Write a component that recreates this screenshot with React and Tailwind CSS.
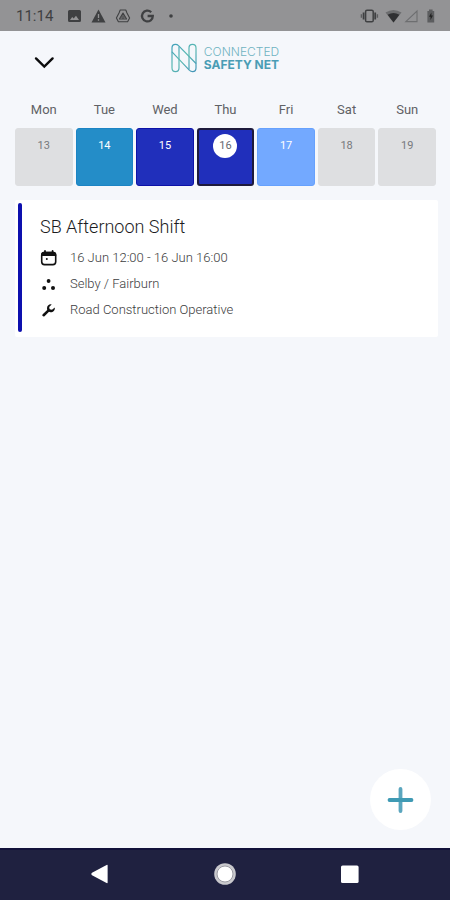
import { useState } from 'react';

const initialDays = [
  { name: 'Mon', date: 13, cell: 'bg-[#dedfe1] text-[#77797d] border border-[#dedfe1]' },
  { name: 'Tue', date: 14, cell: 'bg-[#248dc8] text-white border border-[#1c84c4]' },
  { name: 'Wed', date: 15, cell: 'bg-[#202fbb] text-white border border-[#0d12a8]' },
  { name: 'Thu', date: 16, cell: 'bg-[#202fbb] text-[#66696f] border-2 border-[#1d1a3c]', today: true },
  { name: 'Fri', date: 17, cell: 'bg-[#73a9ff] text-white border border-[#66a1fd]' },
  { name: 'Sat', date: 18, cell: 'bg-[#dedfe1] text-[#77797d] border border-[#dedfe1]' },
  { name: 'Sun', date: 19, cell: 'bg-[#dedfe1] text-[#77797d] border border-[#dedfe1]' }
];

const CalendarIcon = () => (
  <svg viewBox="0 0 18 16" className="w-[18px] h-4" fill="none">
    <rect x="1.7" y="2.6" width="14" height="12" rx="2.8" stroke="#111" strokeWidth="1.6" />
    <path d="M1.2 6V4.6Q1.2 1.8 4 1.8H13.4Q16.2 1.8 16.2 4.6V6Z" fill="#111" />
    <path d="M5 1V3M12.6 1V3" stroke="#111" strokeWidth="1.8" strokeLinecap="round" />
    <circle cx="6.8" cy="9" r="1" fill="#111" />
  </svg>
);

const DotsIcon = () => (
  <svg viewBox="0 0 18 16" className="w-[18px] h-4" fill="#111">
    <circle cx="8.6" cy="5" r="1.9" />
    <circle cx="4.2" cy="12" r="2" />
    <circle cx="13" cy="12" r="2" />
  </svg>
);

const WrenchIcon = () => (
  <svg viewBox="0 0 18 16" className="w-[18px] h-4" fill="none">
    <path d="M3.6 13.2L8.6 8.4" stroke="#111" strokeWidth="2.6" strokeLinecap="round" />
    <path
      d="M11.6 2.4C9 2 6.8 4 7 6.6C7 8.8 8.6 10.4 10.8 10.2C13.2 10.2 15.2 8.2 14.8 5.4L12 7.8L9.6 7.2L9.2 5Z"
      fill="#111"
    />
  </svg>
);

const shift = {
  title: 'SB Afternoon Shift',
  rows: [
    { Icon: CalendarIcon, text: '16 Jun 12:00 - 16 Jun 16:00' },
    { Icon: DotsIcon, text: 'Selby / Fairburn' },
    { Icon: WrenchIcon, text: 'Road Construction Operative' }
  ]
};

const StatusBar = () => (
  <div className="h-[31px] bg-[#939395] flex items-center justify-between pl-4 pr-3 pt-px text-[#3f4042]">
    <div className="flex items-center">
      <span className="text-[15px] w-[51px]">11:14</span>
      <svg viewBox="0 0 110 16" className="w-[110px] h-4">
        <path d="M2.5 2H12.5Q14 2 14 3.5V12.5Q14 14 12.5 14H2.5Q1 14 1 12.5V3.5Q1 2 2.5 2ZM3 12H12L9 7.8L6.7 10.6L5.2 9Z" fill="currentColor" fillRule="evenodd" />
        <path d="M31.5 1.5L38.5 14.5H24.5Z" fill="currentColor" />
        <path d="M31.5 6V10M31.5 11.2V12.8" stroke="#939395" strokeWidth="1.3" />
        <g fill="none" stroke="currentColor" strokeWidth="1.1" strokeLinejoin="round">
          <path d="M53.2 2H58.8L60 5L62.6 10L60.6 13.8H51.4L49.4 10L52 5Z" />
          <path d="M56 5L59.6 11H52.4Z" />
          <circle cx="56" cy="9" r="1.2" />
        </g>
        <path d="M84.2 4.2A5.4 5.4 0 1 0 85.8 8H80.6" fill="none" stroke="currentColor" strokeWidth="2.3" />
        <circle cx="104" cy="8" r="1.8" fill="currentColor" />
      </svg>
    </div>
    <svg viewBox="0 0 78 16" className="w-[78px] h-4">
      <rect x="5.6" y="2.2" width="7.6" height="11.6" rx="1.4" fill="none" stroke="currentColor" strokeWidth="1.5" />
      <path d="M3.6 4.6V11.4M15.2 4.6V11.4" stroke="currentColor" strokeWidth="1.8" />
      <path d="M1.4 6.2V9.8M17.4 6.2V9.8" stroke="#5b5c5e" strokeWidth="1.4" />
      <path d="M25.5 4.6Q33.5 -.4 41.5 4.6L33.5 14.6Z" fill="#6c6d6f" />
      <path d="M27.6 6.8Q33.5 3.2 39.4 6.8L33.5 14.4Z" fill="#2f3032" />
      <path d="M57 3V13.6H45.8Z" fill="none" stroke="#6d6e70" strokeWidth="1.1" />
      <path d="M67.4 3H69V1.6H72.6V3H74.2V14.4H67.4Z" fill="#5c5d5f" />
      <path d="M71.4 4.4L69 8.8H70.5V12L73 7.6H71.4Z" fill="#222" />
    </svg>
  </div>
);

const Logo = () => (
  <div className="flex items-center gap-[7px]">
    <svg viewBox="0 0 26 30" className="w-[26px] h-[30px]" fill="none" stroke="url(#logoGradient)" strokeWidth="1.2" strokeLinejoin="round">
      <defs>
        <linearGradient id="logoGradient" x1="0" y1="0" x2="26" y2="30" gradientUnits="userSpaceOnUse">
          <stop offset="0" stopColor="#3d9dba" />
          <stop offset="0.5" stopColor="#5cbab2" />
          <stop offset="1" stopColor="#3d8fb8" />
        </linearGradient>
      </defs>
      <path d="M1 8.8V5Q1 1.4 4.4 1.4Q6.3 1.4 7.5 2.7L25 20.5V25Q25 28.6 21.6 28.6Q19.8 28.6 18.5 27.3L1 8.8Z" />
      <path d="M1 8.8V25Q1 28.6 4.5 28.6Q8 28.6 8 25V3.4" />
      <path d="M25 20.5V5Q25 1.4 21.5 1.4Q18 1.4 18 5V26.6" />
    </svg>
    <div className="font-[Inter,sans-serif] text-[12px] leading-[13px]">
      <p className="font-light text-[#6fb3c1]">CONNECTED</p>
      <p className="font-bold text-[#4a9db5]">SAFETY NET</p>
    </div>
  </div>
);

const Header = () => (
  <header className="grid grid-cols-[1fr_auto_1fr] items-center h-[54px] px-8">
    <button aria-label="Collapse calendar" className="justify-self-start pt-2">
      <svg viewBox="0 0 24 16" className="w-6 h-4" fill="none" stroke="#0c0c0d" strokeWidth="2.4">
        <path d="M4 4.4L12.3 12.6L20.6 4.4" strokeLinecap="round" />
      </svg>
    </button>
    <Logo />
  </header>
);

const NavBar = () => (
  <nav className="h-[52px] shrink-0 bg-[#1f2140] border-t-2 border-[#12123a] pb-0.5 grid grid-cols-[1fr_auto_1fr] items-center px-[88px]">
    <button aria-label="Back" className="justify-self-start">
      <svg viewBox="0 0 20 20" className="w-5 h-5" fill="#fff">
        <path d="M19.6 1.4V18.6Q19.6 19.4 18.6 19L4 11.2Q2.4 10 4 8.8L18.6 1Q19.6 .6 19.6 1.4Z" />
      </svg>
    </button>
    <button aria-label="Home">
      <svg viewBox="0 0 24 24" className="w-6 h-6">
        <circle cx="12" cy="12" r="10.8" fill="#c9c9cd" />
        <circle cx="12" cy="12" r="8" fill="#fff" stroke="#9b9ba3" strokeWidth="1" />
      </svg>
    </button>
    <button aria-label="Recent apps" className="justify-self-end">
      <svg viewBox="0 0 24 20" className="w-6 h-5" fill="#fff">
        <rect x="3" y="1.4" width="17.6" height="17.6" rx="1.6" />
      </svg>
    </button>
  </nav>
);

const App = () => {
  const [selected, setSelected] = useState(16);

  return (
    <div className="min-h-screen flex flex-col bg-[#f5f7fb] font-[Roboto,sans-serif]">
      <StatusBar />
      <Header />

      <main className="flex-1 flex flex-col pl-[15px] pr-3">
        {/* Week strip */}
        <div className="grid grid-cols-7 gap-[3px] pt-4 pr-0.5">
          {initialDays.map((day) => (
            <button
              key={day.name}
              onClick={() => setSelected(day.date)}
              aria-pressed={selected === day.date}
              className="flex flex-col items-center"
            >
              <span className="text-[13px] leading-[18px] text-[#5f6165] mb-[9px]">
                {day.name}
              </span>
              <span className={`w-full h-[58px] rounded-[3px] flex justify-center items-start
                              text-[11px] leading-[22px] ${day.cell}`}>
                <span className={day.today
                  ? 'w-6 h-6 mt-1 rounded-full bg-white leading-6'
                  : 'mt-[6px]'}>
                  {day.date}
                </span>
              </span>
            </button>
          ))}
        </div>

        {/* Shift card */}
        <article className="mt-[14px] bg-white rounded-xs flex pl-[3px] pt-[3px] pb-[5px]">
          <div className="w-1 rounded-full bg-[#0d10ae]" />
          <div className="pl-[18px] pt-[10px] pb-[9px]">
            <h2 className="text-[18px] leading-7 font-light text-[#1c1c1e] mb-1">
              {shift.title}
            </h2>
            <ul>
              {shift.rows.map(({ Icon, text }) => (
                <li key={text} className="flex items-center gap-3 h-[26px]">
                  <Icon />
                  <span className="text-[13px] font-light text-[#3c3d40]">{text}</span>
                </li>
              ))}
            </ul>
          </div>
        </article>

        <button
          aria-label="Add shift"
          className="mt-auto mb-[18px] mr-[7px] self-end w-[61px] h-[61px] rounded-full
                   bg-white flex items-center justify-center"
        >
          <svg viewBox="0 0 28 28" className="w-7 h-7" fill="none" strokeWidth="3.8" strokeLinecap="round">
            <path d="M13.5 3V25" stroke="#5ba6be" />
            <path d="M2.5 14H24.5" stroke="#3f9ab4" />
          </svg>
        </button>
      </main>

      <NavBar />
    </div>
  );
};

export default App;
